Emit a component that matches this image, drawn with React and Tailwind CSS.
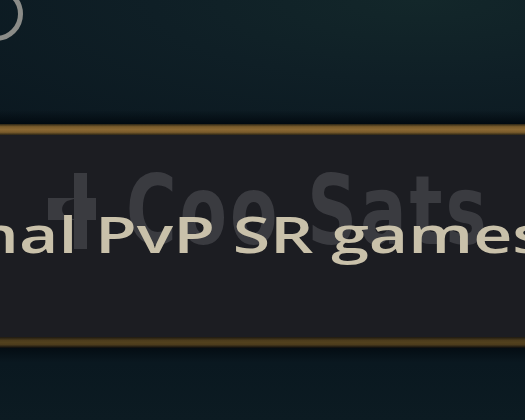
import React from "react";

const App = () => {
  return (
    <div className="w-[525px] h-[420px] overflow-hidden flex flex-col bg-[#0c1a21]">
      {/* top backdrop */}
      <div className="relative h-[124px] bg-[radial-gradient(ellipse_at_80%_0%,#13272a_0%,#0f1f26_45%,#0b1820_100%)]">
        <div className="absolute left-[-31px] top-[-13px] w-[54px] h-[54px] rounded-full border-[5px] border-[#8b8c88] blur-[0.5px]" />
        <div className="absolute left-0 right-0 bottom-0 h-[14px] bg-gradient-to-b from-transparent to-[#020a10]" />
      </div>

      {/* top gold rule */}
      <div className="h-[11px] bg-[linear-gradient(to_bottom,#2a2415,#7a5c2c_25%,#8a6833_50%,#7a5c2c_75%,#2a2415)]" />

      {/* banner */}
      <div className="relative h-[202px] bg-[#1c1d22] flex items-center overflow-hidden">
        {/* watermark */}
        <svg width="50" height="76" viewBox="0 0 50 76" className="absolute left-[48px] top-[38px]">
          <rect x="26" y="0" width="13" height="76" fill="#3a3b40" />
          <rect x="0" y="25" width="48" height="22" fill="#3a3b40" />
          <path d="M26 46 C14 46 10 34 19 28 L26 26 Z" fill="#1c1d22" />
        </svg>
        <span
          className="absolute left-[126px] top-[28px] origin-left scale-x-[0.72] text-[96px] font-bold leading-none text-[#3a3b40] whitespace-nowrap tracking-[4px]"
          style={{ fontFamily: "'DejaVu Sans', sans-serif" }}
        >
          Coo Sats
        </span>
        <span
          className="relative ml-[-170px] mt-[-4px] origin-left scale-x-[1.36] text-[50px] font-semibold leading-none text-[#c9c1aa] whitespace-nowrap blur-[0.4px]"
          style={{ fontFamily: "'Open Sans', sans-serif" }}
        >
          Normal PvP SR games
        </span>
      </div>

      {/* bottom gold rule */}
      <div className="h-[11px] bg-[linear-gradient(to_bottom,#1e1a12,#4c3c1c_30%,#52411e_50%,#4c3c1c_70%,#0a0c0e)]" />

      {/* lower backdrop */}
      <div className="flex-1 bg-[linear-gradient(to_bottom,#040d13,#0a1820_20%,#0c1b22)]" />
    </div>
  );
};

export default App;
